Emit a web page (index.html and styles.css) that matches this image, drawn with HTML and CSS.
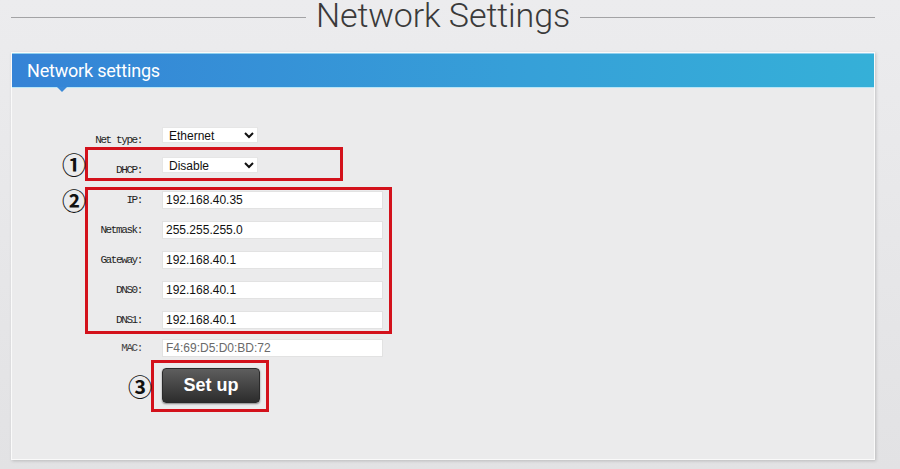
FILE: index.html
```html
<!DOCTYPE html>
<html lang="en">
<head>
  <meta charset="UTF-8">
  <title>Network Settings</title>
  <link rel="stylesheet" href="styles.css">
</head>
<body>

  <!-- page title -->
  <div class="page-title">
    <span class="rule"></span>
    <h1>Network Settings</h1>
    <span class="rule"></span>
  </div>

  <!-- settings panel -->
  <div class="panel">
    <div class="panel-head">Network settings</div>

    <form class="form">
      <div class="group first">
        <div class="row sel">
          <label>Net type:</label>
          <select><option>Ethernet</option></select>
        </div>
      </div>

      <div class="group mark g-dhcp">
        <span class="num n-mid">①</span>
        <div class="row sel">
          <label>DHCP:</label>
          <select><option>Disable</option></select>
        </div>
      </div>

      <div class="group mark g-addr">
        <span class="num n-top">②</span>
        <div class="row"><label>IP:</label><input type="text" value="192.168.40.35"></div>
        <div class="row"><label>Netmask:</label><input type="text" value="255.255.255.0"></div>
        <div class="row"><label>Gateway:</label><input type="text" value="192.168.40.1"></div>
        <div class="row"><label>DNS0:</label><input type="text" value="192.168.40.1"></div>
        <div class="row"><label>DNS1:</label><input type="text" value="192.168.40.1"></div>
      </div>

      <div class="group g-mac">
        <div class="row">
          <label class="muted">MAC:</label>
          <input type="text" value="F4:69:D5:D0:BD:72" disabled>
        </div>
      </div>

      <div class="group mark g-btn">
        <span class="num n-mid">③</span>
        <button type="button" class="setup-btn">Set up</button>
      </div>
    </form>
  </div>

</body>
</html>
```

FILE: styles.css
```css
/* ==== base ==== */
* { margin:0; padding:0; box-sizing:border-box; }
html, body { height:100%; overflow:hidden; }

body {
  background: linear-gradient(#ececee, #e2e2e4);
  font-family: "Liberation Sans", Arial, sans-serif;
  color:#222;
}

/* ==== title with side rules ==== */
.page-title {
  display:flex; align-items:center; gap:10px;
  width:864px; margin-left:11px; height:34px;
}
.page-title .rule { flex:1; height:1px; background:#a3a3a5; }
.page-title h1 {
  font-family: Roboto, sans-serif; font-weight:300;
  font-size:34px; line-height:40px; margin-top:-4px; letter-spacing:-0.1px;
  color:#3a3a3a;
}

/* ==== panel ==== */
.panel {
  width:864px; height:408px; margin:18px 0 0 11px;
  background:#ebebec;
  border:1px solid #fafafa;
  box-shadow:1px 1px 3px rgba(0,0,0,0.18);
}
.panel-head {
  position:relative;
  height:35px; padding-left:15px;
  background:linear-gradient(90deg, #3583d6, #36a0d8 60%, #35b0d8);
  border-top:1px solid #8fd0ef; border-bottom:1px solid #b9e6f7;
  color:#fff; font-family: Roboto, sans-serif; font-size:18px; line-height:33px;
  letter-spacing:-0.2px;
}
.panel-head::after {
  content:""; position:absolute; left:45px; top:100%;
  border-left:5px solid transparent; border-right:5px solid transparent;
  border-top:5px solid #3a89d7;
}

/* ==== form ==== */
.form {
  display:flex; flex-direction:column; align-items:flex-start;
  padding:36px 0 0 73px;
}
.group {
  position:relative;
  display:flex; flex-direction:column; gap:12px;
  border:3px solid transparent;
}
.group.mark { border-color:#d3111b; }

.g-dhcp { width:258px; margin-top:1px; padding:7px 0 5px; }
.g-addr { width:307px; margin-top:6px; padding:1px 0 2px; }
.g-mac  { margin-top:2px; }
.g-btn  { margin-left:66px; padding:5px 6px 6px 8px; }

.row { display:flex; align-items:flex-end; }
.row label {
  width:54px; margin-right:20px; padding-bottom:4px;
  text-align:right; line-height:10px;
  font-family:"Liberation Mono", monospace; font-size:11px; letter-spacing:-1.4px;
  color:#1e1e1e;
}
.row.sel label { padding-bottom:0; margin-bottom:-2px; }
.row label.muted { color:#444; }

select {
  width:96px; height:16px; padding-left:2px;
  font-family:"Liberation Sans", Arial, sans-serif; font-size:12px;
  background:#fff; border:1px solid #e6e6e6; color:#111;
}
input {
  width:221px; height:18px; padding-left:3px;
  font-family:"Liberation Sans", Arial, sans-serif; font-size:12px;
  background:#fff; border:1px solid #e2e2e2; color:#111;
}
input:disabled { color:#6a6a6a; background:#fff; }

/* ==== circled markers ==== */
.num {
  position:absolute; right:100%; margin-right:2px;
  font-family:"Noto Sans CJK JP", sans-serif; font-size:24px; line-height:24px;
  font-weight:bold; color:#111;
}
.n-mid { top:50%; transform:translateY(-50%); }
.n-top { top:-2px; }

/* ==== button ==== */
.setup-btn {
  width:98px; height:35px;
  background:linear-gradient(#5e5e5e, #2c2c2c);
  border:1px solid #2a2a2a; border-radius:4px;
  box-shadow:0 1px 2px rgba(0,0,0,0.45);
  color:#fff; font-family:"Liberation Sans", Arial, sans-serif;
  font-size:18px; font-weight:bold;
}
```
